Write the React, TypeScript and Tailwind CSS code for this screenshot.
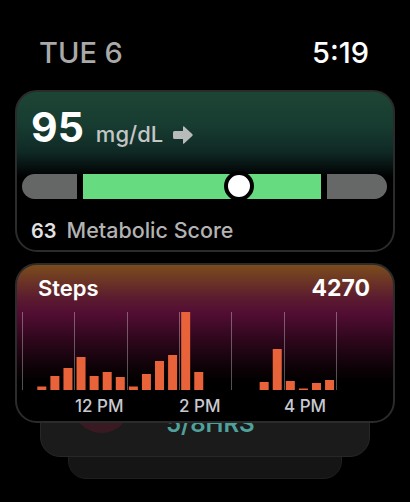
import React from 'react';

const font = { fontFamily: 'Inter, "Noto Sans", sans-serif' };

// step counts, one bar per 15 min slot (0 = no bar)
const stepBars = [3.5, 14, 22, 33, 14, 18, 13, 3.5, 16, 29, 35, 78, 18, 0, 0, 0, 0, 8, 41, 9, 1.5, 7, 10];

const TrendArrow = () => (
  <svg width="20" height="20" viewBox="0 0 20 20" className="ml-[10px] translate-y-[3px]">
    <path
      d="M1.5 6 H10 V2 Q10 0.6 11.1 1.5 L19.2 9 Q20.2 10 19.2 11 L11.1 18.5 Q10 19.4 10 18 V14 H1.5 Q0 14 0 12.5 V7.5 Q0 6 1.5 6 Z"
      fill="#b7bbba"
    />
  </svg>
);

const StepsChart = () => {
  const grid = [0, 1, 2, 3, 4, 5, 6].map((k) => 5 + 52.33 * k);
  return (
    <svg width="376" height="78" viewBox="0 0 376 78" className="block">
      {grid.map((x, i) => (
        <line key={i} x1={Math.round(x) + 0.5} x2={Math.round(x) + 0.5} y1="0" y2="78" stroke="rgba(255,255,255,0.32)" strokeWidth="1" />
      ))}
      {stepBars.map((h, i) =>
        h > 0 ? (
          <rect key={i} x={20.3 + 13.08 * i} y={78 - h} width="9" height={h} fill="#e8633a" />
        ) : null
      )}
    </svg>
  );
};

const GlucoseCard = () => (
  <div className="relative z-30 mx-[15px] h-[162px] rounded-[22px] border-2 border-[#2b2b2b] bg-[linear-gradient(180deg,#1d4535_0%,#173b30_22%,#0f2925_38%,#071412_46%,#000_54%)]">
    <div className="flex items-baseline pl-[14px] pt-[15px] leading-none">
      <span className="text-[41px] font-bold text-white">95</span>
      <span className="ml-[12px] text-[22px] font-medium text-[#c3c6c5]">mg/dL</span>
      <TrendArrow />
    </div>
    <div className="relative mt-[26px] flex h-[25px] gap-[6px] pl-[5px] pr-[6px]">
      <div className="w-[55px] rounded-l-full bg-[#646766]" />
      <div className="w-[238px] bg-[#66db80]" />
      <div className="flex-1 rounded-r-full bg-[#656867]" />
      <div className="absolute left-[207px] top-[-3px] h-[30px] w-[30px] rounded-full border-[4px] border-black bg-white" />
    </div>
    <div className="mt-[21px] flex items-baseline pl-[14px] leading-none">
      <span className="text-[20px] font-semibold text-[#e2e2e2]">63</span>
      <span className="ml-[10px] text-[21.5px] font-medium text-[#b3b3b3]">Metabolic Score</span>
    </div>
  </div>
);

const StepsCard = () => (
  <div className="relative z-30 mx-[15px] mt-[11px] h-[160px] rounded-[22px] border-2 border-[#2b2b2b] bg-[linear-gradient(180deg,#7b4c1c_0%,#5a1a30_22%,#520d33_31%,#2a0619_50%,#0d0207_66%,#000_76%)]">
    <div className="flex items-baseline justify-between pl-[21px] pr-[23px] pt-[12px] leading-none">
      <span className="text-[22px] font-semibold text-white">Steps</span>
      <span className="text-[23px] font-bold text-white">4270</span>
    </div>
    <div className="mt-[12px]">
      <StepsChart />
    </div>
    <div className="relative mt-[8px] h-[17px] text-[17px] font-medium leading-none text-[#c9c9d1]">
      <span className="absolute left-[58px]">12 PM</span>
      <span className="absolute left-[162px]">2 PM</span>
      <span className="absolute left-[267px]">4 PM</span>
    </div>
  </div>
);

// card tucked under the steps card: only its lower strip shows
const SleepCard = () => (
  <div className="relative z-20 mx-[40px] -mt-[56px] flex h-[90px] items-start rounded-[20px] border border-[#272727] bg-[#1b1b1b]">
    <div className="ml-[32px] mt-[8px] h-[57px] w-[57px] rounded-full bg-[#3a1a22]" />
    <span className="ml-[36px] mt-[44px] text-[24px] font-semibold leading-none text-[#4fa29c]">5/8HRS</span>
  </div>
);

const App: React.FC = () => {
  return (
    <div className="h-[502px] w-[410px] overflow-hidden bg-black" style={font}>
      <div className="flex justify-between pl-[39px] pr-[41px] pt-[38px] text-[29px] font-medium leading-none">
        <span className="text-[#a9a9a9]">TUE 6</span>
        <span className="text-white">5:19</span>
      </div>
      <div className="mt-[23px] flex flex-col">
        <GlucoseCard />
        <StepsCard />
        <SleepCard />
        <div className="relative z-10 mx-[68px] -mt-[18px] h-[40px] rounded-[18px] border border-[#1f1f1f] bg-[#151515]" />
      </div>
    </div>
  );
};

export default App;
